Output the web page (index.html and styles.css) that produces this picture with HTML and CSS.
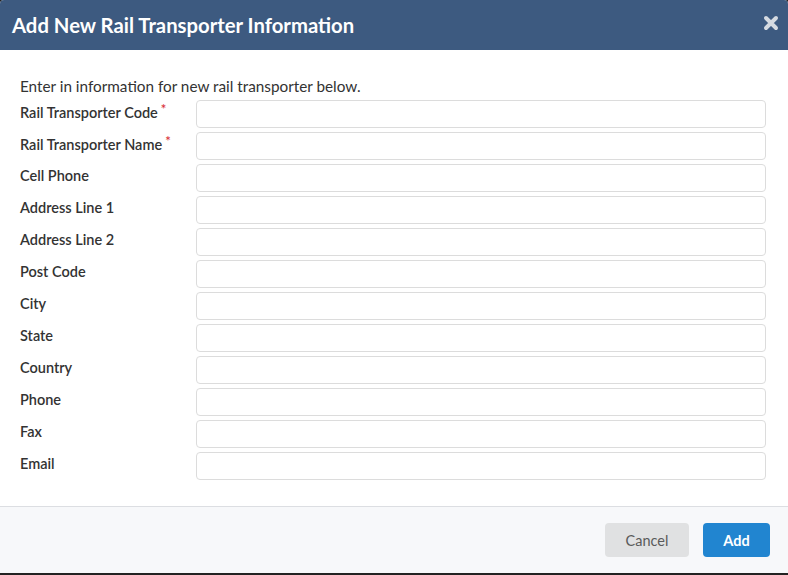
FILE: index.html
```html
<!DOCTYPE html>
<html lang="en">
<head>
  <meta charset="UTF-8">
  <title>Add New Rail Transporter</title>
  <link rel="stylesheet" href="styles.css">
</head>
<body>
  <div class="modal">
    <div class="modal-header">
      <h1>Add New Rail Transporter Information</h1>
      <span class="close">
        <svg width="16" height="16" viewBox="0 0 16 16"><path d="M3 3 L13 13 M13 3 L3 13" stroke="#d5dae1" stroke-width="4" stroke-linecap="round"/></svg>
      </span>
    </div>
    <div class="modal-body">
      <p class="intro">Enter in information for new rail transporter below.</p>
      <div class="row"><label>Rail Transporter Code<span class="req">*</span></label><input type="text"></div>
      <div class="row"><label>Rail Transporter Name<span class="req">*</span></label><input type="text"></div>
      <div class="row"><label>Cell Phone</label><input type="text"></div>
      <div class="row"><label>Address Line 1</label><input type="text"></div>
      <div class="row"><label>Address Line 2</label><input type="text"></div>
      <div class="row"><label>Post Code</label><input type="text"></div>
      <div class="row"><label>City</label><input type="text"></div>
      <div class="row"><label>State</label><input type="text"></div>
      <div class="row"><label>Country</label><input type="text"></div>
      <div class="row"><label>Phone</label><input type="text"></div>
      <div class="row"><label>Fax</label><input type="text"></div>
      <div class="row"><label>Email</label><input type="text"></div>
    </div>
    <div class="modal-footer">
      <button class="btn cancel">Cancel</button>
      <button class="btn add">Add</button>
    </div>
  </div>
</body>
</html>
```
FILE: styles.css
```css
* {
	margin: 0;
	padding: 0;
	box-sizing: border-box;
}

body {
	background: #222;
	font-family: Lato, "Open Sans", sans-serif;
	color: #333;
}

.modal {
	width: 788px;
	height: 573px;
	background: #fff;
	border-radius: 4px 4px 0 0;
	overflow: hidden;
	display: flex;
	flex-direction: column;
}

.modal-header {
	height: 50px;
	background: #3d5a80;
	display: flex;
	align-items: center;
	justify-content: space-between;
	padding: 0 9px 0 12px;
}

.modal-header h1 {
	color: #fff;
	font-size: 20.3px;
	font-weight: 700;
}

.close {
	display: flex;
	margin-top: -4px;
}

.modal-body {
	padding: 27px 22px 26px 20px;
	border-bottom: 1px solid #dcdee2;
}

.intro {
	font-size: 15.3px;
	line-height: 18px;
	margin-bottom: 5px;
}

.row {
	display: flex;
	align-items: center;
	margin-bottom: 4px;
}

.row:last-child {
	margin-bottom: 0;
}

.row label {
	width: 176px;
	flex: none;
	font-size: 14.5px;
	font-weight: 600;
	color: #333;
	margin-top: -6px;
}

.req {
	color: #d9343a;
	font-size: 13px;
	vertical-align: 4px;
	margin-left: 3px;
}

.row input {
	flex: 1;
	height: 28px;
	border: 1px solid #dcdcdc;
	border-radius: 4px;
	background: #fff;
}

.modal-footer {
	flex: 1;
	background: #f7f8fa;
	display: flex;
	justify-content: flex-end;
	align-items: flex-start;
	padding: 16px 18px 0 0;
	gap: 14px;
}

.btn {
	height: 34px;
	border: none;
	border-radius: 4px;
	font-family: Lato, "Open Sans", sans-serif;
	font-size: 14.5px;
}

.cancel {
	width: 84px;
	background: #e0e1e2;
	color: #5a5a5a;
}

.add {
	width: 67px;
	background: #2185d0;
	color: #fff;
	font-weight: 700;
}
```
